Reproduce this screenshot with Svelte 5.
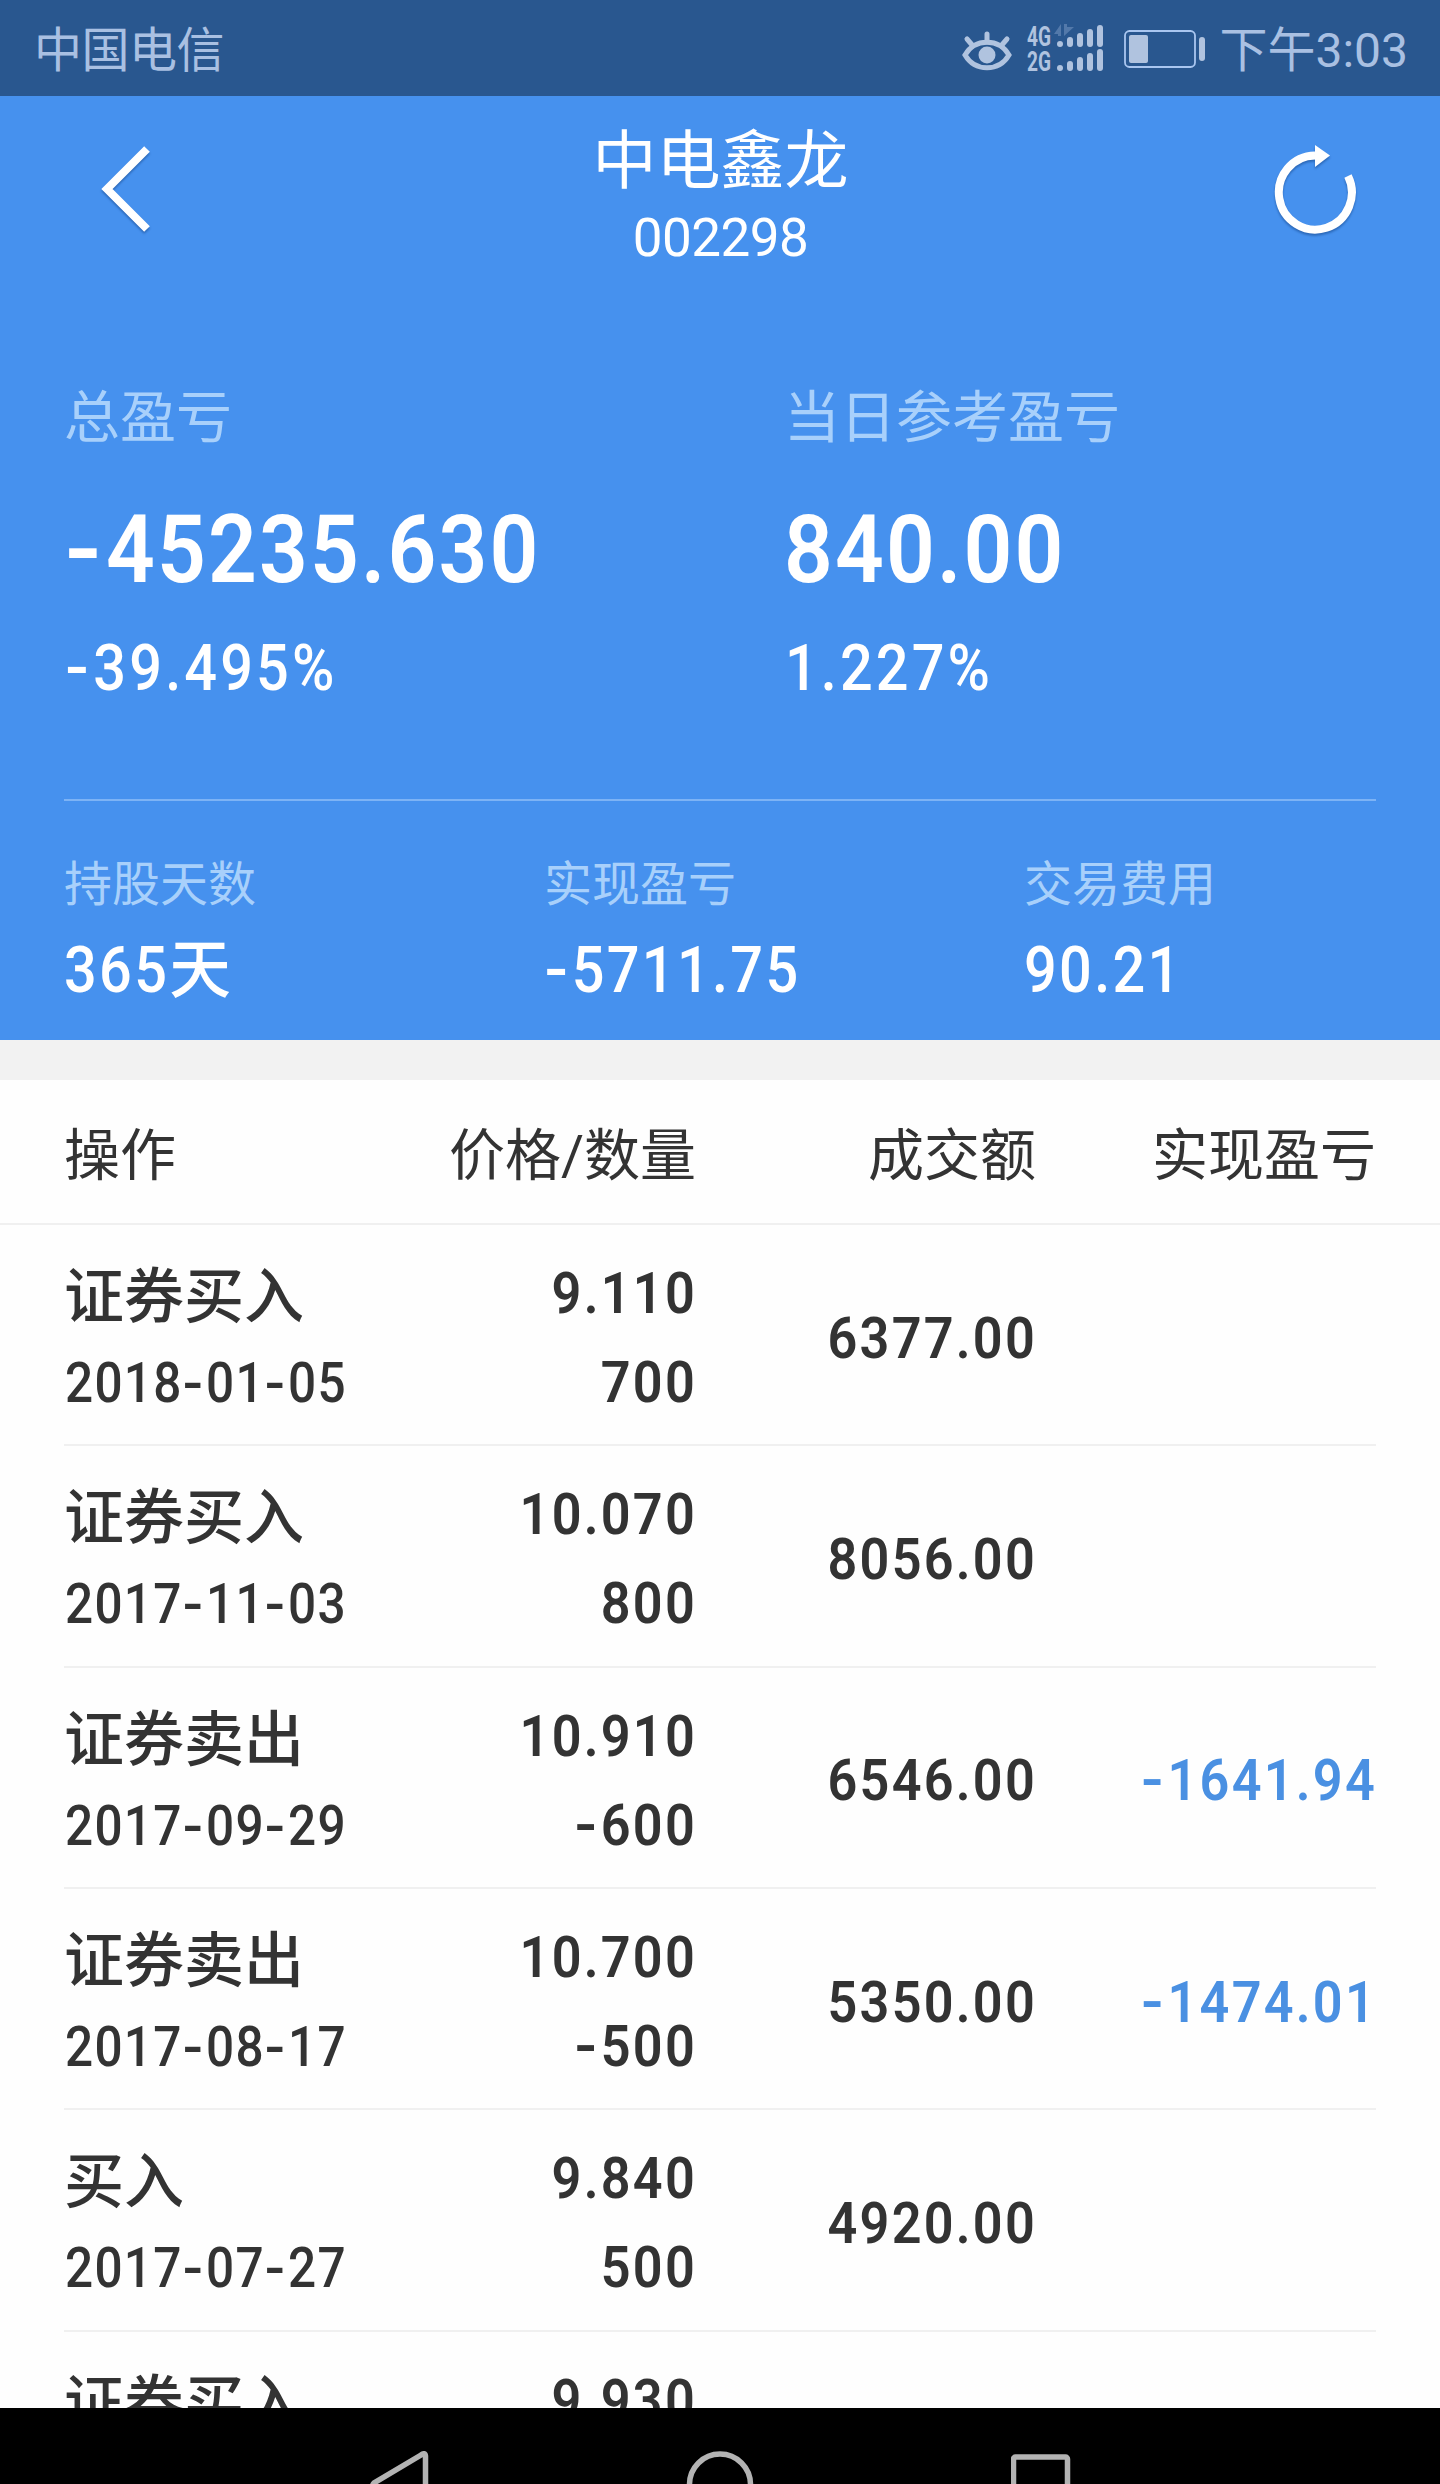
<script lang="ts">
  type Trade = {
    action: string;
    date: string;
    price: string;
    amount: string; // negative when sold
    turnover?: string;
    profit?: string;
  };

  const stock = { name: "中电鑫龙", code: "002298" };

  const totals = [
    { label: "总盈亏", value: "-45235.630", percent: "-39.495%" },
    { label: "当日参考盈亏", value: "840.00", percent: "1.227%" },
  ];

  const details = [
    { label: "持股天数", value: "365", unit: "天" },
    { label: "实现盈亏", value: "-5711.75" },
    { label: "交易费用", value: "90.21" },
  ];

  const columns = ["操作", "价格/数量", "成交额", "实现盈亏"];

  const trades: Trade[] = [
    { action: "证券买入", date: "2018-01-05", price: "9.110", amount: "700", turnover: "6377.00" },
    { action: "证券买入", date: "2017-11-03", price: "10.070", amount: "800", turnover: "8056.00" },
    { action: "证券卖出", date: "2017-09-29", price: "10.910", amount: "-600", turnover: "6546.00", profit: "-1641.94" },
    { action: "证券卖出", date: "2017-08-17", price: "10.700", amount: "-500", turnover: "5350.00", profit: "-1474.01" },
    { action: "买入", date: "2017-07-27", price: "9.840", amount: "500", turnover: "4920.00" },
    { action: "证券买入", date: "", price: "9.930", amount: "" },
  ];

  const signalBars = [6, 10, 14, 18, 22];
</script>

<!-- the hyphen is too narrow for the figures, so it gets its own box -->
{#snippet figure(text: string)}
  {#each text.split("-") as part, i}{#if i > 0}<span class="dash">-</span>{/if}{part}{/each}
{/snippet}

<div class="screen">
  <div class="status">
    <span class="carrier">中国电信</span>
    <div class="indicators">
      <svg class="eye" width="50" height="44" viewBox="0 0 50 44">
        <path d="M3 26 C13 9 37 9 47 26 C37 43 13 43 3 26 Z" />
        <path d="M25 13V5M11 17L5 10M39 17L45 10" />
        <circle cx="25" cy="26" r="8.5" />
      </svg>
      <svg class="signal" width="78" height="50" viewBox="0 0 78 50">
        <text x="0" y="23" textLength="24" lengthAdjust="spacingAndGlyphs">4G</text>
        <text x="0" y="47.5" textLength="24" lengthAdjust="spacingAndGlyphs">2G</text>
        <path class="data" d="M27 11L34 1V13H31V11ZM37 1H40V4H47L37 13Z" />
        {#each signalBars as h, i}
          <rect x={30 + i * 10} y={24 - h} width="6" height={h} rx="3" />
          <rect x={30 + i * 10} y={48 - h} width="6" height={h} rx="3" />
        {/each}
      </svg>
      <svg class="battery" width="82" height="40" viewBox="0 0 82 40">
        <rect class="case" x="1" y="1" width="70" height="36" rx="4.5" />
        <rect x="5" y="5" width="19" height="28" rx="2" />
        <rect x="75" y="7" width="6" height="24" rx="3" />
      </svg>
      <span class="time">下午3:03</span>
    </div>
  </div>

  <header>
    <div class="bar">
      <button aria-label="返回">
        <svg width="56" height="96" viewBox="0 0 56 96">
          <path d="M49 6L9 46L49 86" />
        </svg>
      </button>
      <div class="title">
        <h1>{stock.name}</h1>
        <div class="code">{stock.code}</div>
      </div>
      <button aria-label="刷新">
        <svg width="88" height="96" viewBox="0 0 88 96">
          <path d="M44 13.5A36.5 37 0 1 0 77 34" />
          <path class="head" d="M44 3L59 13.5L44 25Z" />
        </svg>
      </button>
    </div>

    <div class="totals">
      {#each totals as item}
        <div>
          <div class="label">{item.label}</div>
          <div class="value">{@render figure(item.value)}</div>
          <div class="percent">{@render figure(item.percent)}</div>
        </div>
      {/each}
    </div>

    <div class="details">
      {#each details as item}
        <div>
          <div class="label">{item.label}</div>
          <div class="value">
            {@render figure(item.value)}{#if item.unit}<span class="unit">{item.unit}</span>{/if}
          </div>
        </div>
      {/each}
    </div>
  </header>

  <main>
    <div class="columns">
      {#each columns as column}
        <span>{column}</span>
      {/each}
    </div>
    <div class="list">
      {#each trades as trade}
        <div class="row">
          <div class="operation">
            <div class="action">{trade.action}</div>
            <div class="date">{@render figure(trade.date)}</div>
          </div>
          <div class="deal">
            <div>{trade.price}</div>
            <div class="amount">{@render figure(trade.amount)}</div>
          </div>
          <div class="turnover">{trade.turnover ?? ""}</div>
          <div class="profit">{@render figure(trade.profit ?? "")}</div>
        </div>
      {/each}
    </div>
  </main>

  <nav>
    <svg width="62" height="33" viewBox="0 0 62 33">
      <path d="M58.5 40V5Q58 1 54 4L7 32Q4 35 8 38" />
    </svg>
    <svg width="68" height="33" viewBox="0 0 68 33">
      <circle cx="34" cy="33.5" r="30.5" />
    </svg>
    <svg width="62" height="33" viewBox="0 0 62 33">
      <rect x="2.5" y="6" width="54" height="54" rx="2" />
    </svg>
  </nav>
</div>

<style>
  :global(body) {
    background-color: #fefefe;
  }

  .screen {
    display: flex;
    flex-direction: column;
    height: 2484px;
    overflow: hidden;
    font-family: Roboto, "Noto Sans CJK SC", sans-serif;
    color: #333;
  }

  .status {
    display: flex;
    justify-content: space-between;
    align-items: center;
    box-sizing: border-box;
    height: 96px;
    padding: 5px 32px 0 34px;
    background-color: #29578f;
    color: #a9c0e2;
    font-size: 48px;
    line-height: 64px;
  }

  .carrier {
    letter-spacing: -0.5px;
  }

  .indicators {
    display: flex;
    align-items: center;
  }

  .indicators svg {
    fill: #b0c3df;
  }

  .eye {
    margin-right: 15px;
  }

  .eye path {
    fill: none;
    stroke: #b0c3df;
    stroke-width: 5;
    stroke-linecap: round;
  }

  .signal {
    margin: -6px 19px 0 0;
  }

  .signal text {
    font-size: 27px;
    font-weight: 700;
  }

  .signal .data {
    fill: #5379aa;
  }

  .battery {
    margin: -2px 13px 0 0;
  }

  .battery .case {
    fill: none;
    stroke: #a9c6f0;
    stroke-width: 1.8;
  }

  header {
    box-sizing: border-box;
    height: 944px;
    padding: 26px 64px 0;
    background-color: #4691ee;
    color: #fff;
  }

  .bar {
    display: flex;
    justify-content: space-between;
    height: 256px;
  }

  button {
    align-self: flex-start;
    display: flex;
    width: 120px;
    margin-top: 21px;
    padding: 0 0 0 34px;
    background-color: transparent;
    border: none;
  }

  .title + button {
    justify-content: flex-end;
    margin-top: 20px;
    padding: 0 17px 0 0;
  }

  button svg {
    fill: none;
    stroke: #fff;
    filter: drop-shadow(0 2px 1px rgba(0, 40, 100, 0.4));
  }

  button path {
    stroke-width: 8;
  }

  button .head {
    fill: #fff;
    stroke: none;
  }

  .title {
    padding-left: 1px;
    text-align: center;
  }

  h1 {
    margin: 0;
    font-size: 64px;
    font-weight: 400;
    line-height: 80px;
  }

  .code {
    font-size: 53px;
    letter-spacing: -0.5px;
    line-height: 73px;
  }

  .totals {
    display: grid;
    grid-template-columns: 720px 1fr;
    height: 421px;
    border-bottom: 2px solid #7db3f5;
    font-weight: 600;
  }

  .label {
    color: #a8d0fb;
    font-weight: 400;
  }

  /* narrow figures with wide gaps */
  .value,
  .percent,
  .date,
  .deal,
  .turnover,
  .profit {
    transform: scaleX(0.9);
    transform-origin: left;
    white-space: nowrap;
  }

  .totals .label {
    font-size: 56px;
    line-height: 80px;
  }

  .totals .value {
    margin: 42px 0 29px;
    font-size: 95px;
    letter-spacing: 2.4px;
    line-height: 100px;
  }

  .percent {
    padding-left: 1px;
    font-size: 64px;
    font-weight: 500;
    letter-spacing: 3.5px;
    line-height: 80px;
  }

  .details {
    display: grid;
    grid-template-columns: 480px 480px 1fr;
    padding-top: 54px;
  }

  .details .label {
    font-size: 48px;
    line-height: 60px;
  }

  .details .value {
    margin-top: 16px;
    font-size: 64px;
    font-weight: 500;
    letter-spacing: 2.6px;
    line-height: 80px;
  }

  .unit {
    display: inline-block;
    transform: scaleX(1.07);
    transform-origin: left;
  }

  .dash {
    display: inline-block;
    margin: 0 0.06em 0 0.04em;
    transform: scaleX(1.2);
  }

  main {
    display: flex;
    flex: 1;
    flex-direction: column;
    min-height: 0;
    border-top: 40px solid #f2f2f2;
  }

  .columns,
  .row {
    display: grid;
    grid-template-columns: 300px 332px 340px 340px;
    align-items: center;
    text-align: right;
  }

  .columns {
    height: 141px;
    padding: 0 64px 2px;
    border-bottom: 2px solid #f0f0f0;
    font-size: 56px;
  }

  .columns span:first-child,
  .operation {
    text-align: left;
  }

  .list {
    flex: 1;
    overflow: hidden;
  }

  .row {
    box-sizing: border-box;
    height: 221.33px;
    margin: 0 64px;
    border-bottom: 2px solid #f0f0f0;
    font-size: 58px;
    font-weight: 600;
    letter-spacing: 2.5px;
    line-height: 80px;
  }

  .operation,
  .deal {
    align-self: start;
    height: 100%;
  }

  .operation {
    padding-top: 33px;
  }

  .action {
    font-size: 60px;
    font-weight: 500;
    letter-spacing: 0;
    white-space: nowrap;
  }

  .date {
    margin-top: 5px;
    padding-left: 1px;
    font-size: 55px;
    font-weight: 500;
    letter-spacing: 1.5px;
  }

  .deal,
  .turnover,
  .profit {
    margin-right: -1px;
    transform-origin: right;
  }

  .deal {
    padding-top: 28px;
  }

  .amount {
    margin-top: 9px;
  }

  .turnover,
  .profit {
    padding-top: 6px;
  }

  .profit {
    color: #4a90e2;
  }

  nav {
    display: flex;
    justify-content: space-between;
    align-items: flex-end;
    box-sizing: border-box;
    height: 76px;
    padding: 0 367px;
    background-color: #000;
  }

  nav svg {
    fill: none;
    stroke: #b3b3b3;
    stroke-width: 5.5;
  }
</style>
